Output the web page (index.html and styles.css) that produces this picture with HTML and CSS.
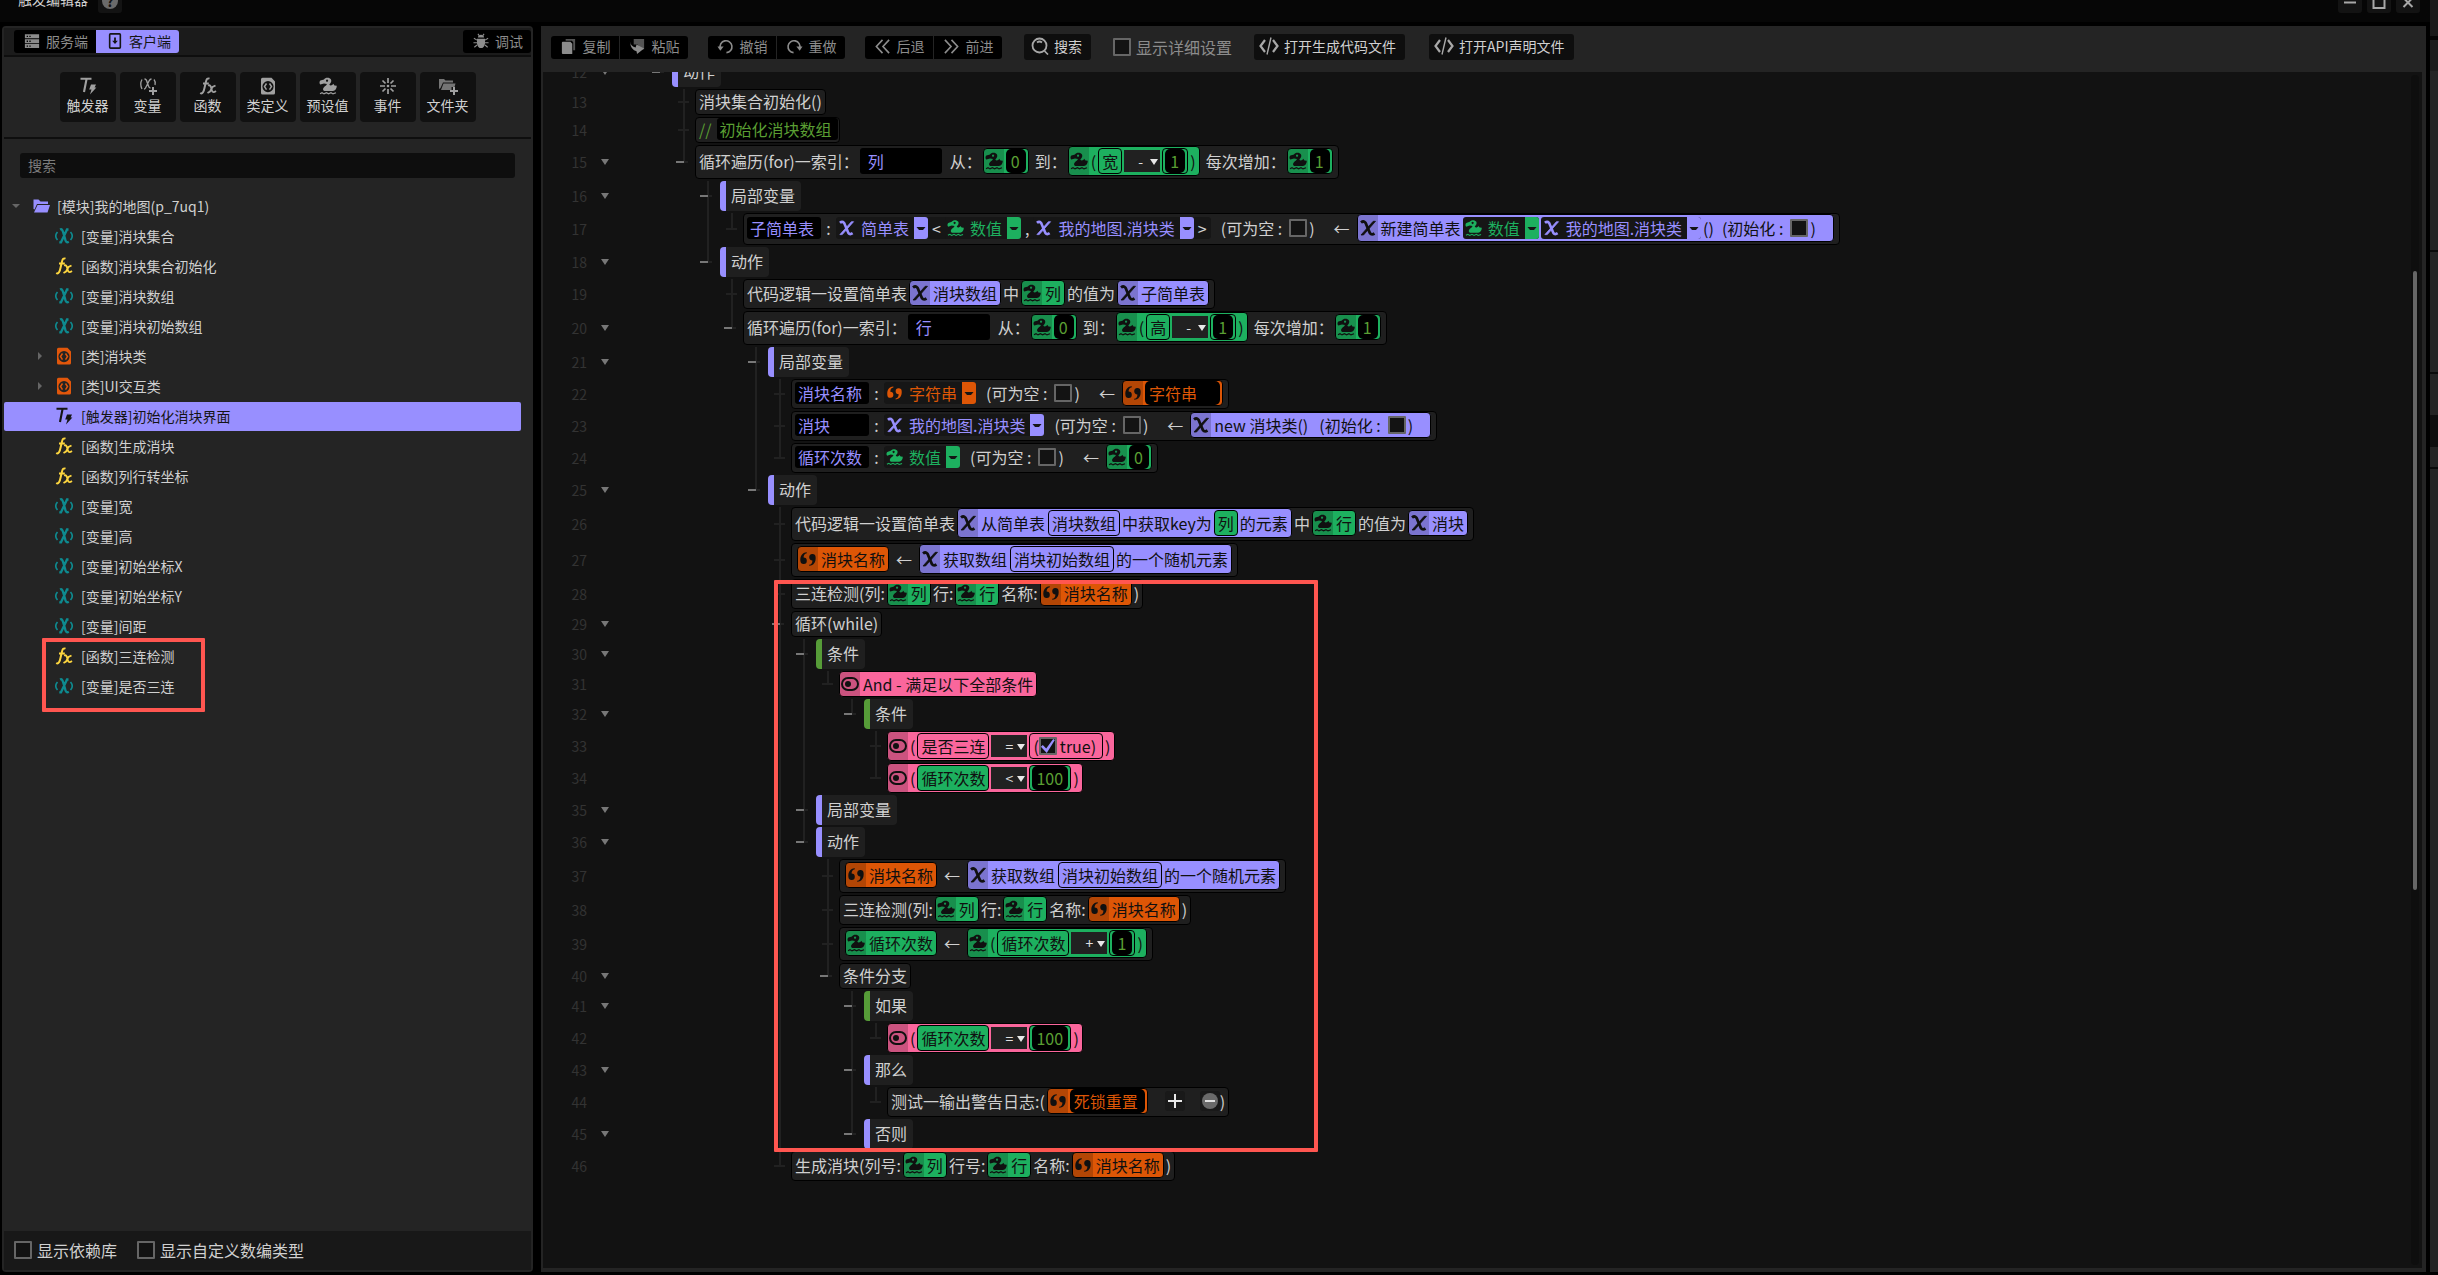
FILE: index.html
```html
<!DOCTYPE html>
<html lang="zh-CN">
<head>
<meta charset="utf-8">
<title>触发编辑器</title>
<link rel="stylesheet" href="styles.css">
</head>
<body>

<svg class="sprite" aria-hidden="true">
    <symbol id="duck" viewBox="0 0 18 18"><path d="M5 2.500C6 .5 10.500 0 12 2.500C13 4.500 11.500 6.300 10.300 7.400C11 9 13.300 8.600 14.200 6.800L15.500 8.600L17.800 8.800C17.800 12 16 13.600 14 14H5.500C3.200 13 3.600 10.600 7 8.400L8 7L5 6.400L1.200 7.600C.2 6.500.3 4.500 1.400 3.600ZM8 2.500A1.100 1.100 0 1 0 8.100 2.500Z" fill="currentColor" fill-rule="evenodd"/><path d="M1 16.700L3 15.700L5 16.900L7.400 15.700L9.600 16.900L12 15.700L14 16.900L17 15.800" fill="none" stroke="currentColor" stroke-width="1.200"/></symbol>
    <symbol id="chi" viewBox="0 0 18 18"><path d="M2 3.500C4.500 1.500 6.500 2.500 7.500 6L10 12C11 15 12.500 16.500 15.500 14.500" fill="none" stroke="currentColor" stroke-width="2.800"/><path d="M16.500 2.300H14.200L2 16H4.500Z" fill="currentColor" stroke="currentColor" stroke-width=".8"/></symbol>
    <symbol id="quote" viewBox="0 0 18 18"><path d="M7.800 3.200C5.500 3.500 4.600 5.200 4.600 7.600A3.200 3.200 0 1 1 1.400 11C1 6 3 2.600 7.800 2.200Z" fill="currentColor"/><path d="M10.200 14.800C12.500 14.500 13.400 12.800 13.400 10.400A3.200 3.200 0 1 1 16.600 7C17 12 15 15.400 10.200 15.800Z" fill="currentColor"/></symbol>
    <symbol id="bool" viewBox="0 0 18 18"><rect x="1" y="3" width="16" height="12" rx="6" fill="none" stroke="currentColor" stroke-width="2"/><circle cx="7" cy="9" r="3" fill="currentColor"/></symbol>
    <symbol id="var" viewBox="0 0 18 18"><path d="M5 2.500C7.200 1.500 7.800 4 8.500 6.500L10 11.500C10.500 14.500 11.500 16 13.800 14.800M13.500 2.500H12L6 15.300H4.300" fill="none" stroke="currentColor" stroke-width="2.300"/><path d="M2.500 5C.3 7.500.3 10.500 2.500 13M15.500 5C17.700 7.500 17.700 10.500 15.500 13" fill="none" stroke="currentColor" stroke-width="1.600"/></symbol>
    <symbol id="fx" viewBox="0 0 18 18"><path d="M1.200 16C3.600 17.500 4.800 14.500 5.600 10.500L7 4.500C7.600 2 8.600.8 10.500 1.700M4 6.500H9.800" fill="none" stroke="currentColor" stroke-width="2"/><path d="M9 8.500C11.500 7.500 12 10 12.500 12C13.200 15.500 14.500 15.800 17 14M16.500 8.500L13.500 10L11 14.500L8.500 16" fill="none" stroke="currentColor" stroke-width="1.800"/></symbol>
    <symbol id="class" viewBox="0 0 18 18"><path fill-rule="evenodd" fill="currentColor" d="M3.500.8H12.500L16 4.500V16Q16 17.500 14.500 17.500H3.500Q2 17.500 2 16V2.300Q2 .8 3.500.8ZM9 4A5.600 5.600 0 1 0 9 15.200A5.600 5.600 0 1 0 9 4Z"/><path d="M7.500 6.500L5.500 9.600L7.500 12.700M10.500 6.500L12.500 9.600L10.500 12.700" fill="none" stroke="currentColor" stroke-width="1.500"/></symbol>
    <symbol id="trig" viewBox="0 0 18 18"><path d="M1.500 1.800H12.500M7.600 1.800L5 15" fill="none" stroke="currentColor" stroke-width="2.100"/><path d="M12 7.500H17L15.600 10.600H17.400L11 17.600L12.500 12.600H10.200Z" fill="currentColor"/></symbol>
    <symbol id="folder" viewBox="0 0 18 18"><path d="M1.500 2.500H6.500L8.500 4.500H16V7H5L2.500 12.500L1.500 12Z" fill="currentColor"/><path d="M5.500 8H18L15.500 15.500H2Z" fill="currentColor"/></symbol>
    <symbol id="plus" viewBox="0 0 18 18"><path d="M9 2V16M2 9H16" fill="none" stroke="currentColor" stroke-width="2"/></symbol>
    <symbol id="caret" viewBox="0 0 14 22"><path d="M2.500 10H11.500L9 13H5Z" fill="#151515"/></symbol>
    <symbol id="server" viewBox="0 0 18 18"><path fill-rule="evenodd" fill="currentColor" d="M1 1.500H17V6H1ZM1 7H17V11.500H1ZM1 12.500H17V17H1ZM3 3V4.500H4.500V3ZM6 3V4.500H7.500V3ZM3 8.500V10H4.500V8.500ZM6 8.500V10H7.500V8.500ZM3 14V15.500H4.500V14ZM6 14V15.500H7.500V14Z"/></symbol>
    <symbol id="client" viewBox="0 0 18 18"><rect x="3" y="1" width="12" height="16" rx="1" fill="none" stroke="currentColor" stroke-width="1.800"/><path d="M9 5V11" stroke="currentColor" stroke-width="2"/><path d="M5.800 8.600H12.200L9 12.400Z" fill="currentColor"/></symbol>
    <symbol id="bug" viewBox="0 0 18 18"><path d="M5.500 5Q6 2 9 2T12.500 5ZM4.500 6.500H13.500V12Q12.500 17 9 17T4.500 12Z" fill="currentColor"/><path d="M5.500 1L7 3M12.500 1L11 3M4.500 8L1 6M4.500 11H.5M4.500 13.500L1.500 16M13.500 8L17 6M13.500 11H17.500M13.500 13.500L16.500 16" stroke="currentColor" stroke-width="1.200"/></symbol>
    <symbol id="event" viewBox="0 0 18 18"><path d="M9 1V6M9 12V17M1 9H6M12 9H17M3.500 3.500L6.500 6.500M11.500 11.500L14.500 14.500M3.500 14.500L6.500 11.500M11.500 6.500L14.500 3.500" stroke="currentColor" stroke-width="1.700"/><circle cx="9" cy="9" r="1.300" fill="currentColor"/></symbol>
    <symbol id="copy" viewBox="0 0 18 18"><path d="M6 1H16V13H14V4.500L12.500 3H6Z" fill="currentColor" opacity=".6"/><path d="M3 4H11L13 6V17H3Q2 17 2 16V5Q2 4 3 4Z" fill="currentColor"/></symbol>
    <symbol id="paste" viewBox="0 0 18 18"><path d="M5 1H16V12H13L9 7H5Z" fill="currentColor" opacity=".6"/><path d="M1 4Q2 9 7 10L8 7L16 11L8.500 17L8 14Q2 13 1 4Z" fill="currentColor"/></symbol>
    <symbol id="undo" viewBox="0 0 18 18"><path d="M3.500 11A6.300 6.300 0 1 1 10 15.500" fill="none" stroke="currentColor" stroke-width="1.700"/><path d="M.5 9H7L3.500 13.500Z" fill="currentColor"/></symbol>
    <symbol id="redo" viewBox="0 0 18 18"><path d="M14.500 11A6.300 6.300 0 1 0 8 15.500" fill="none" stroke="currentColor" stroke-width="1.700"/><path d="M17.500 9H11L14.500 13.500Z" fill="currentColor"/></symbol>
    <symbol id="back" viewBox="0 0 18 18"><path d="M9 2L2.500 9L9 16M16 2L9.500 9L16 16" fill="none" stroke="currentColor" stroke-width="1.700"/></symbol>
    <symbol id="fwd" viewBox="0 0 18 18"><path d="M2 2L8.500 9L2 16M9 2L15.500 9L9 16" fill="none" stroke="currentColor" stroke-width="1.700"/></symbol>
    <symbol id="find" viewBox="0 0 18 18"><circle cx="8.500" cy="8.500" r="7" fill="none" stroke="currentColor" stroke-width="1.800"/><path d="M13.500 14L17 17.500M6 5.500Q8.500 3.500 11 5.500" fill="none" stroke="currentColor" stroke-width="1.700"/></symbol>
    <symbol id="code" viewBox="0 0 20 18"><path d="M6 3L1.500 9L6 15M14 3L18.500 9L14 15" fill="none" stroke="currentColor" stroke-width="2.200"/><path d="M12 .5L8 17.500" stroke="currentColor" stroke-width="1.400"/></symbol>
</svg>

<header class="titlebar">
    <span class="title">触发编辑器</span>
    <button class="win help" aria-label="帮助"><b>?</b></button>
    <span class="grow"></span>
    <button class="win" aria-label="最小化"><svg class="ic" viewBox="0 0 18 18"><path d="M3 10.500H15" stroke="currentColor" stroke-width="2"/></svg></button>
    <button class="win" aria-label="最大化"><svg class="ic" viewBox="0 0 18 18"><rect x="3.500" y="4" width="11" height="12" fill="none" stroke="currentColor" stroke-width="2"/></svg></button>
    <button class="win" aria-label="关闭"><svg class="ic" viewBox="0 0 18 18"><path d="M4.500 6L13.500 15M13.500 6L4.500 15" stroke="currentColor" stroke-width="2"/></svg></button>
</header>

<main class="layout">

<aside class="sidebar">
    <nav class="tabs">
        <button class="tab"><svg class="ic"><use href="#server"/></svg>服务端</button>
        <button class="tab on"><svg class="ic"><use href="#client"/></svg>客户端</button>
        <span class="grow"></span>
        <button class="tab debug"><svg class="ic"><use href="#bug"/></svg>调试</button>
    </nav>
    <div class="create">
        <button><svg class="ic"><use href="#trig"/></svg>触发器</button>
        <button><svg class="ic" viewBox="0 0 18 18"><path d="M5.500 2Q7.500 2 8 5L9.500 9Q10 11 11.500 11M12.500 2Q11 2 10 4L6.500 11Q6 12 5 12M3 2.500Q.5 7 3 12M15 2.500Q17 5 16 8" fill="none" stroke="currentColor" stroke-width="1.300"/><path d="M14 10V18M10 14H18" stroke="currentColor" stroke-width="2"/></svg>变量</button>
        <button><svg class="ic"><use href="#fx"/></svg>函数</button>
        <button><svg class="ic"><use href="#class"/></svg>类定义</button>
        <button><svg class="ic"><use href="#duck"/></svg>预设值</button>
        <button><svg class="ic"><use href="#event"/></svg>事件</button>
        <button><svg class="ic" viewBox="0 0 18 18"><path d="M0 2H5L6.500 3.500H14V5.500H4L1.500 11L0 12ZM4.500 6.500H16.500L15.500 10H12.500V13H2Z" fill="currentColor" opacity=".7"/><path d="M15 10V18M11 14H19" stroke="currentColor" stroke-width="2"/></svg>文件夹</button>
    </div>
    <input class="search" type="text" placeholder="搜索" aria-label="搜索">
    <ul class="tree">
        <li class="root"><span class="arrow open"></span><svg class="ic mod"><use href="#folder"/></svg>[模块]我的地图(p_7uq1)</li>
        <li><svg class="ic var"><use href="#var"/></svg>[变量]消块集合</li>
        <li><svg class="ic fx"><use href="#fx"/></svg>[函数]消块集合初始化</li>
        <li><svg class="ic var"><use href="#var"/></svg>[变量]消块数组</li>
        <li><svg class="ic var"><use href="#var"/></svg>[变量]消块初始数组</li>
        <li><span class="arrow"></span><svg class="ic cls"><use href="#class"/></svg>[类]消块类</li>
        <li><span class="arrow"></span><svg class="ic cls"><use href="#class"/></svg>[类]UI交互类</li>
        <li class="sel"><svg class="ic"><use href="#trig"/></svg>[触发器]初始化消块界面</li>
        <li><svg class="ic fx"><use href="#fx"/></svg>[函数]生成消块</li>
        <li><svg class="ic fx"><use href="#fx"/></svg>[函数]列行转坐标</li>
        <li><svg class="ic var"><use href="#var"/></svg>[变量]宽</li>
        <li><svg class="ic var"><use href="#var"/></svg>[变量]高</li>
        <li><svg class="ic var"><use href="#var"/></svg>[变量]初始坐标X</li>
        <li><svg class="ic var"><use href="#var"/></svg>[变量]初始坐标Y</li>
        <li><svg class="ic var"><use href="#var"/></svg>[变量]间距</li>
        <li><svg class="ic fx"><use href="#fx"/></svg>[函数]三连检测</li>
        <li><svg class="ic var"><use href="#var"/></svg>[变量]是否三连</li>
        <li class="mark mark-tree" aria-hidden="true"></li>
    </ul>
    <footer class="options">
        <label><input type="checkbox">显示依赖库</label>
        <label><input type="checkbox">显示自定义数编类型</label>
    </footer>
</aside>

<section class="editor">
    <div class="toolbar">
        <div class="group">
            <button><svg class="ic"><use href="#copy"/></svg>复制</button>
            <button><svg class="ic"><use href="#paste"/></svg>粘贴</button>
        </div>
        <div class="group">
            <button><svg class="ic"><use href="#undo"/></svg>撤销</button>
            <button><svg class="ic"><use href="#redo"/></svg>重做</button>
        </div>
        <div class="group">
            <button><svg class="ic"><use href="#back"/></svg>后退</button>
            <button><svg class="ic"><use href="#fwd"/></svg>前进</button>
        </div>
        <button class="btn"><svg class="ic"><use href="#find"/></svg>搜索</button>
        <label><input type="checkbox">显示详细设置</label>
        <button class="btn wide"><svg class="ic"><use href="#code"/></svg>打开生成代码文件</button>
        <button class="btn wide"><svg class="ic"><use href="#code"/></svg>打开API声明文件</button>
    </div>

    <div class="canvas">
    <ol class="lines">
        <li class="line"><span class="num">12</span><button class="fold" aria-label="折叠"></button><i class="m end"></i>
            <div class="block">动作</div></li>

        <li class="line"><span class="num">13</span><span class="fold"></span><i></i><i class="t"></i>
            <div class="stmt">消块集合初始化()</div></li>

        <li class="line"><span class="num">14</span><span class="fold"></span><i></i><i class="t"></i>
            <div class="stmt comment">//<input class="field note" value="初始化消块数组" aria-label="注释"></div></li>

        <li class="line"><span class="num">15</span><button class="fold" aria-label="折叠"></button><i></i><i class="m end"></i>
            <div class="stmt loop">循环遍历(for)一索引：<input class="field idx" value="列" aria-label="索引">从：<span class="chip num-c"><svg class="ic"><use href="#duck"/></svg><input class="lit" value="0" aria-label="从"></span>到：<span class="chip num-c"><svg class="ic"><use href="#duck"/></svg>(<span class="chip num-c">宽</span><span class="op"><select aria-label="运算符"><option>-</option></select></span><span class="chip num-c"><input class="lit" value="1" aria-label="数值"></span>)</span>每次增加：<span class="chip num-c"><svg class="ic"><use href="#duck"/></svg><input class="lit" value="1" aria-label="每次增加"></span></div></li>

        <li class="line"><span class="num">16</span><button class="fold" aria-label="折叠"></button><i></i><i></i><i class="m"></i>
            <div class="block">局部变量</div></li>

        <li class="line"><span class="num">17</span><span class="fold"></span><i></i><i></i><i class="v"></i><i class="t end"></i>
            <div class="stmt"><input class="field" value="子简单表" aria-label="变量名"><span class="sep">:</span><span class="type obj-t"><svg class="ic"><use href="#chi"/></svg>简单表<button class="caret" aria-label="选择类型"><svg><use href="#caret"/></svg></button><span class="gen">&lt;</span><span class="type num-t"><svg class="ic"><use href="#duck"/></svg>数值<button class="caret" aria-label="选择类型"><svg><use href="#caret"/></svg></button></span><span class="gen">,</span><span class="type obj-t"><svg class="ic"><use href="#chi"/></svg>我的地图.消块类<button class="caret" aria-label="选择类型"><svg><use href="#caret"/></svg></button></span><span class="gen">&gt;</span></span><label class="opt">(可为空 :<input type="checkbox">)</label><span class="arr">←</span><span class="chip obj-c"><svg class="ic"><use href="#chi"/></svg><span class="cap">新建简单表</span><span class="type num-t"><svg class="ic"><use href="#duck"/></svg>数值<button class="caret" aria-label="选择类型"><svg><use href="#caret"/></svg></button></span><span class="type obj-t"><svg class="ic"><use href="#chi"/></svg>我的地图.消块类<button class="caret" aria-label="选择类型"><svg><use href="#caret"/></svg></button></span>()<label class="opt init">(初始化 :<input type="checkbox">)</label></span></div></li>

        <li class="line"><span class="num">18</span><button class="fold" aria-label="折叠"></button><i></i><i></i><i class="m end"></i>
            <div class="block">动作</div></li>

        <li class="line"><span class="num">19</span><span class="fold"></span><i></i><i></i><i></i><i class="t"></i>
            <div class="stmt">代码逻辑一设置简单表<span class="chip obj-c"><svg class="ic"><use href="#chi"/></svg><span class="cap">消块数组</span></span>中<span class="chip num-c"><svg class="ic"><use href="#duck"/></svg><span class="cap">列</span></span>的值为<span class="chip obj-c"><svg class="ic"><use href="#chi"/></svg><span class="cap">子简单表</span></span></div></li>

        <li class="line"><span class="num">20</span><button class="fold" aria-label="折叠"></button><i></i><i></i><i></i><i class="m end"></i>
            <div class="stmt loop">循环遍历(for)一索引：<input class="field idx" value="行" aria-label="索引">从：<span class="chip num-c"><svg class="ic"><use href="#duck"/></svg><input class="lit" value="0" aria-label="从"></span>到：<span class="chip num-c"><svg class="ic"><use href="#duck"/></svg>(<span class="chip num-c">高</span><span class="op"><select aria-label="运算符"><option>-</option></select></span><span class="chip num-c"><input class="lit" value="1" aria-label="数值"></span>)</span>每次增加：<span class="chip num-c"><svg class="ic"><use href="#duck"/></svg><input class="lit" value="1" aria-label="每次增加"></span></div></li>

        <li class="line"><span class="num">21</span><button class="fold" aria-label="折叠"></button><i></i><i></i><i></i><i></i><i class="m"></i>
            <div class="block">局部变量</div></li>

        <li class="line"><span class="num">22</span><span class="fold"></span><i></i><i></i><i></i><i></i><i class="v"></i><i class="t"></i>
            <div class="stmt"><input class="field" value="消块名称" aria-label="变量名"><span class="sep">:</span><span class="type str-t"><svg class="ic"><use href="#quote"/></svg>字符串<button class="caret" aria-label="选择类型"><svg><use href="#caret"/></svg></button></span><label class="opt">(可为空 :<input type="checkbox">)</label><span class="arr">←</span><span class="chip str-c"><svg class="ic"><use href="#quote"/></svg><input class="lit str" value="字符串" aria-label="初始值"></span></div></li>

        <li class="line"><span class="num">23</span><span class="fold"></span><i></i><i></i><i></i><i></i><i class="v"></i><i class="t"></i>
            <div class="stmt"><input class="field" value="消块" aria-label="变量名"><span class="sep">:</span><span class="type obj-t"><svg class="ic"><use href="#chi"/></svg>我的地图.消块类<button class="caret" aria-label="选择类型"><svg><use href="#caret"/></svg></button></span><label class="opt">(可为空 :<input type="checkbox">)</label><span class="arr">←</span><span class="chip obj-c"><svg class="ic"><use href="#chi"/></svg><span class="cap">new 消块类()</span><label class="opt init">(初始化 :<input type="checkbox">)</label></span></div></li>

        <li class="line"><span class="num">24</span><span class="fold"></span><i></i><i></i><i></i><i></i><i class="v"></i><i class="t end"></i>
            <div class="stmt"><input class="field" value="循环次数" aria-label="变量名"><span class="sep">:</span><span class="type num-t"><svg class="ic"><use href="#duck"/></svg>数值<button class="caret" aria-label="选择类型"><svg><use href="#caret"/></svg></button></span><label class="opt">(可为空 :<input type="checkbox">)</label><span class="arr">←</span><span class="chip num-c"><svg class="ic"><use href="#duck"/></svg><input class="lit" value="0" aria-label="初始值"></span></div></li>

        <li class="line"><span class="num">25</span><button class="fold" aria-label="折叠"></button><i></i><i></i><i></i><i></i><i class="m end"></i>
            <div class="block">动作</div></li>

        <li class="line"><span class="num">26</span><span class="fold"></span><i></i><i></i><i></i><i></i><i></i><i class="t"></i>
            <div class="stmt">代码逻辑一设置简单表<span class="chip obj-c"><svg class="ic"><use href="#chi"/></svg><span class="cap">从简单表</span><span class="chip obj-c">消块数组</span>中获取key为<span class="chip num-c">列</span><span class="tail">的元素</span></span>中<span class="chip num-c"><svg class="ic"><use href="#duck"/></svg><span class="cap">行</span></span>的值为<span class="chip obj-c"><svg class="ic"><use href="#chi"/></svg><span class="cap">消块</span></span></div></li>

        <li class="line"><span class="num">27</span><span class="fold"></span><i></i><i></i><i></i><i></i><i></i><i class="t"></i>
            <div class="stmt"><span class="chip str-c"><svg class="ic"><use href="#quote"/></svg><span class="cap">消块名称</span></span><span class="arr">←</span><span class="chip obj-c"><svg class="ic"><use href="#chi"/></svg><span class="cap">获取数组</span><span class="chip obj-c">消块初始数组</span><span class="tail">的一个随机元素</span></span></div></li>

        <li class="line"><span class="num">28</span><span class="fold"></span><i></i><i></i><i></i><i></i><i></i><i class="t"></i>
            <div class="stmt">三连检测(列:<span class="chip num-c"><svg class="ic"><use href="#duck"/></svg><span class="cap">列</span></span>行:<span class="chip num-c"><svg class="ic"><use href="#duck"/></svg><span class="cap">行</span></span>名称:<span class="chip str-c"><svg class="ic"><use href="#quote"/></svg><span class="cap">消块名称</span></span>)</div></li>

        <li class="line"><span class="num">29</span><button class="fold" aria-label="折叠"></button><i></i><i></i><i></i><i></i><i></i><i class="m"></i>
            <div class="stmt">循环(while)</div></li>

        <li class="line"><span class="num">30</span><button class="fold" aria-label="折叠"></button><i></i><i></i><i></i><i></i><i></i><i class="v"></i><i class="m"></i>
            <div class="block cond">条件</div></li>

        <li class="line"><span class="num">31</span><span class="fold"></span><i></i><i></i><i></i><i></i><i></i><i class="v"></i><i class="v"></i><i class="t end"></i>
            <span class="chip bool-c"><svg class="ic"><use href="#bool"/></svg><span class="cap">And - 满足以下全部条件</span></span></li>

        <li class="line"><span class="num">32</span><button class="fold" aria-label="折叠"></button><i></i><i></i><i></i><i></i><i></i><i class="v"></i><i class="v"></i><i></i><i class="m end"></i>
            <div class="block cond">条件</div></li>

        <li class="line"><span class="num">33</span><span class="fold"></span><i></i><i></i><i></i><i></i><i></i><i class="v"></i><i class="v"></i><i></i><i></i><i class="t"></i>
            <span class="chip bool-c"><svg class="ic"><use href="#bool"/></svg>(<span class="chip bool-c">是否三连</span><span class="op"><select aria-label="运算符"><option>=</option></select></span><label class="chip bool-c">(<input type="checkbox" checked><span class="cap">true)</span></label>)</span></li>

        <li class="line"><span class="num">34</span><span class="fold"></span><i></i><i></i><i></i><i></i><i></i><i class="v"></i><i class="v"></i><i></i><i></i><i class="t end"></i>
            <span class="chip bool-c"><svg class="ic"><use href="#bool"/></svg>(<span class="chip num-c">循环次数</span><span class="op"><select aria-label="运算符"><option>&lt;</option></select></span><span class="chip num-c"><input class="lit big" value="100" aria-label="数值"></span>)</span></li>

        <li class="line"><span class="num">35</span><button class="fold" aria-label="折叠"></button><i></i><i></i><i></i><i></i><i></i><i class="v"></i><i class="m"></i>
            <div class="block">局部变量</div></li>

        <li class="line"><span class="num">36</span><button class="fold" aria-label="折叠"></button><i></i><i></i><i></i><i></i><i></i><i class="v"></i><i class="m end"></i>
            <div class="block">动作</div></li>

        <li class="line"><span class="num">37</span><span class="fold"></span><i></i><i></i><i></i><i></i><i></i><i class="v"></i><i></i><i class="t"></i>
            <div class="stmt"><span class="chip str-c"><svg class="ic"><use href="#quote"/></svg><span class="cap">消块名称</span></span><span class="arr">←</span><span class="chip obj-c"><svg class="ic"><use href="#chi"/></svg><span class="cap">获取数组</span><span class="chip obj-c">消块初始数组</span><span class="tail">的一个随机元素</span></span></div></li>

        <li class="line"><span class="num">38</span><span class="fold"></span><i></i><i></i><i></i><i></i><i></i><i class="v"></i><i></i><i class="t"></i>
            <div class="stmt">三连检测(列:<span class="chip num-c"><svg class="ic"><use href="#duck"/></svg><span class="cap">列</span></span>行:<span class="chip num-c"><svg class="ic"><use href="#duck"/></svg><span class="cap">行</span></span>名称:<span class="chip str-c"><svg class="ic"><use href="#quote"/></svg><span class="cap">消块名称</span></span>)</div></li>

        <li class="line"><span class="num">39</span><span class="fold"></span><i></i><i></i><i></i><i></i><i></i><i class="v"></i><i></i><i class="t"></i>
            <div class="stmt"><span class="chip num-c"><svg class="ic"><use href="#duck"/></svg><span class="cap">循环次数</span></span><span class="arr">←</span><span class="chip num-c"><svg class="ic"><use href="#duck"/></svg>(<span class="chip num-c">循环次数</span><span class="op"><select aria-label="运算符"><option>+</option></select></span><span class="chip num-c"><input class="lit" value="1" aria-label="数值"></span>)</span></div></li>

        <li class="line"><span class="num">40</span><button class="fold" aria-label="折叠"></button><i></i><i></i><i></i><i></i><i></i><i class="v"></i><i></i><i class="m end"></i>
            <div class="stmt">条件分支</div></li>

        <li class="line"><span class="num">41</span><button class="fold" aria-label="折叠"></button><i></i><i></i><i></i><i></i><i></i><i class="v"></i><i></i><i></i><i class="m"></i>
            <div class="block cond">如果</div></li>

        <li class="line"><span class="num">42</span><span class="fold"></span><i></i><i></i><i></i><i></i><i></i><i class="v"></i><i></i><i></i><i class="v"></i><i class="t end"></i>
            <span class="chip bool-c"><svg class="ic"><use href="#bool"/></svg>(<span class="chip num-c">循环次数</span><span class="op"><select aria-label="运算符"><option>=</option></select></span><span class="chip num-c"><input class="lit big" value="100" aria-label="数值"></span>)</span></li>

        <li class="line"><span class="num">43</span><button class="fold" aria-label="折叠"></button><i></i><i></i><i></i><i></i><i></i><i class="v"></i><i></i><i></i><i class="m"></i>
            <div class="block">那么</div></li>

        <li class="line"><span class="num">44</span><span class="fold"></span><i></i><i></i><i></i><i></i><i></i><i class="v"></i><i></i><i></i><i class="v"></i><i class="t end"></i>
            <div class="stmt">测试一输出警告日志:(<span class="chip str-c"><svg class="ic"><use href="#quote"/></svg><input class="lit str" value="死锁重置" aria-label="日志"></span><button class="args" aria-label="添加参数"><svg class="ic"><use href="#plus"/></svg></button><button class="args" aria-label="移除参数"><svg class="ic" viewBox="0 0 18 18"><circle cx="9" cy="9" r="8" fill="#6a6a6a"/><path d="M4 9H14" stroke="#e0e0e0" stroke-width="2"/></svg></button>)</div></li>

        <li class="line"><span class="num">45</span><button class="fold" aria-label="折叠"></button><i></i><i></i><i></i><i></i><i></i><i class="v"></i><i></i><i></i><i class="m end"></i>
            <div class="block">否则</div></li>

        <li class="line"><span class="num">46</span><span class="fold"></span><i></i><i></i><i></i><i></i><i></i><i class="t end"></i>
            <div class="stmt">生成消块(列号:<span class="chip num-c"><svg class="ic"><use href="#duck"/></svg><span class="cap">列</span></span>行号:<span class="chip num-c"><svg class="ic"><use href="#duck"/></svg><span class="cap">行</span></span>名称:<span class="chip str-c"><svg class="ic"><use href="#quote"/></svg><span class="cap">消块名称</span></span>)</div></li>

        <li class="mark mark-code" aria-hidden="true"></li>
    </ol>
    <div class="scroll"><div class="thumb"></div></div>
    </div>
</section>

<!-- edge of the neighbouring dock panel -->
<aside class="dock">
    <div class="d-head"></div>
    <div class="d-body">
        <div class="d-pad"></div>
        <div class="d-tools"></div>
        <div class="d-find"></div>
    </div>
</aside>

</main>
</body>
</html>
```
FILE: styles.css
```css
* {
    box-sizing: border-box;
}

body {
    margin: 0;
    height: 100vh;
    display: flex;
    flex-direction: column;
    overflow: hidden;
    background: #000;
    color: #d0d0d0;
    font-family: "Noto Sans CJK SC", "Noto Sans", sans-serif;
    font-size: 14px;
    line-height: 20px;
}

button, input, select {
    font: inherit;
    color: inherit;
    margin: 0;
    padding: 0;
    border: 0;
    background: none;
}

ul, ol {
    list-style: none;
    margin: 0;
    padding: 0;
}

.sprite {
    position: absolute;
    width: 0;
    height: 0;
}

.ic {
    flex: none;
    width: 18px;
    height: 18px;
    overflow: visible;
}

.grow {
    flex: 1;
}

input[type=checkbox] {
    appearance: none;
    flex: none;
    width: 18px;
    height: 18px;
    border: 2px solid #666;
    border-radius: 1px;
    background: #131313;
}

input[type=checkbox]:checked::before {
    content: "";
    display: block;
    height: 14px;
    background: #988fff;
    clip-path: polygon(0 55%, 14% 42%, 38% 68%, 88% 0, 100% 8%, 42% 100%);
}

/* title bar */

.titlebar {
    flex: none;
    height: 22px;
    margin-bottom: 4px;
    padding: 0 18px;
    background: #060606;
    display: flex;
    align-items: flex-start;
    gap: 5px;
}

.title {
    margin: -11px 5px 0 0;
}

.win {
    width: 24px;
    height: 24px;
    margin-top: -11px;
    border-radius: 3px;
    background: #131313;
    color: #a8a8a8;
    display: flex;
    align-items: center;
    justify-content: center;
}

.help b {
    width: 16px;
    height: 16px;
    border-radius: 50%;
    background: #6a6a6a;
    color: #131313;
    font-size: 14px;
    line-height: 16px;
}

.layout {
    flex: 1;
    min-height: 0;
    display: flex;
    padding: 0 0 3px 2px;
}

/* sidebar */

.sidebar {
    flex: 0 0 531px;
    margin-right: 8px;
    border: 2px solid #242424;
    border-radius: 4px;
    background: #242424;
    display: flex;
    flex-direction: column;
}

.tabs {
    flex: none;
    height: 29px;
    padding: 2px 0 2px 10px;
    border-bottom: 2px solid #0e0e0e;
    background: #1b1b1b;
    display: flex;
}

.tab {
    height: 23px;
    padding: 0 8px 2px 10px;
    border-radius: 3px 0 0 3px;
    background: #000;
    color: #8c8c8c;
    display: flex;
    align-items: center;
    gap: 6px;
}

.tab .ic {
    width: 16px;
    height: 16px;
}

.tab.on {
    padding-left: 11px;
    border-radius: 0 3px 3px 0;
    background: #988fff;
    color: #151515;
}

.tab.debug {
    border-radius: 3px;
}

.create {
    flex: none;
    height: 82px;
    padding-top: 15px;
    border-bottom: 2px solid #0e0e0e;
    display: flex;
    justify-content: center;
    gap: 4px;
}

.create button {
    width: 56px;
    height: 50px;
    padding-bottom: 2px;
    border-radius: 4px;
    background: #111;
    display: flex;
    flex-direction: column;
    align-items: center;
    justify-content: center;
}

.create .ic {
    color: #a0a0a0;
}

.search {
    flex: none;
    height: 25px;
    margin: 14px 16px;
    padding: 0 8px 2px;
    border-radius: 3px;
    background: #0e0e0e;
}

.search::placeholder {
    color: #7c7c7c;
}

.tree {
    flex: 1;
    position: relative;
}

.tree li {
    height: 29px;
    margin: 0 10px 1px 0;
    padding: 0 0 2px 51px;
    border-radius: 2px;
    display: flex;
    align-items: center;
    gap: 8px;
    position: relative;
}

.tree .root {
    padding-left: 28px;
    gap: 7px;
}

.tree .sel {
    background: #988fff;
    color: #151515;
}

.arrow {
    position: absolute;
    left: 34px;
    border: 4px solid transparent;
    border-left-color: #666;
    border-right: 0;
}

.arrow.open {
    left: 8px;
    border: 4px solid transparent;
    border-top-color: #666;
    border-bottom: 0;
}

.mod { color: #988fff; }
.var { color: #0e8a8f; }
.fx { color: #fcd53f; }
.cls { color: #e2570b; }

.options {
    flex: none;
    height: 39px;
    padding: 0 0 2px 10px;
    background: #181818;
    display: flex;
    align-items: center;
    gap: 20px;
    font-size: 16px;
}

.options label,
.toolbar label {
    display: flex;
    align-items: center;
    gap: 5px;
}

/* red frames */

.mark,
.tree .mark {
    position: absolute;
    margin: 0;
    padding: 0;
    border: 4px solid #ff5650;
    border-radius: 1px;
    pointer-events: none;
}

.tree .mark-tree {
    left: 38px;
    top: 446px;
    width: 163px;
    height: 74px;
}

.mark-code {
    left: 231px;
    top: 523px;
    width: 544px;
    height: 572px;
}

/* editor */

.editor {
    flex: 1;
    min-width: 0;
    border: solid #242424;
    border-width: 0 4px 4px 2px;
    background: #121212;
    display: flex;
    flex-direction: column;
}

.toolbar {
    flex: none;
    height: 46px;
    padding: 0 0 4px 8px;
    background: #242424;
    display: flex;
    align-items: center;
}

.group {
    margin-right: 20px;
    border-radius: 3px;
    background: #000;
    color: #8c8c8c;
    display: flex;
}

.group button {
    width: 68px;
    height: 23px;
    padding-bottom: 2px;
    display: flex;
    align-items: center;
    justify-content: center;
    gap: 6px;
}

.group button + button {
    width: 69px;
    border-left: 1px solid #242424;
}

.group .ic {
    width: 17px;
    height: 17px;
}

.btn {
    height: 26px;
    margin-left: 2px;
    padding: 0 9px 2px 7px;
    border-radius: 3px;
    background: #0e0e0e;
    display: flex;
    align-items: center;
    gap: 5px;
}

.btn .ic {
    color: #a8a8a8;
}

.btn + label {
    margin: 0 20px 0 22px;
    color: #8c8c8c;
    font-size: 16px;
}

.btn.wide {
    margin-right: 22px;
    padding: 0 9px 2px 5px;
}

.btn.wide .ic {
    width: 20px;
}

.canvas {
    flex: 1;
    min-height: 0;
    position: relative;
    overflow: hidden;
}

.lines {
    margin-top: -15px;
    position: relative;
    font-size: 16px;
    white-space: nowrap;
}

.line {
    margin-bottom: 2px;
    display: flex;
    align-items: center;
}

.line .num {
    width: 44px;
    color: #333;
    font-size: 14px;
    text-align: right;
}

.fold {
    width: 36px;
    margin-right: 24px;
    height: 20px;
    display: flex;
    align-items: center;
    justify-content: center;
}

button.fold::before {
    content: "";
    border: 4px solid transparent;
    border-top: 6px solid #777;
    border-bottom: 0;
}

/* indent guides, one column for each level */

.line > i {
    flex: none;
    width: 24px;
    align-self: stretch;
    position: relative;
}

.line > i.v::before,
.line > i.t::before,
.line > i.m::before {
    content: "";
    position: absolute;
    left: 12px;
    top: 0;
    bottom: -2px;
    width: 2px;
    background: #212121;
}

.line > i.end::before {
    bottom: 50%;
}

.line > i.t::after,
.line > i.m::after {
    content: "";
    position: absolute;
    left: 7px;
    top: 50%;
    width: 11px;
    height: 2px;
    margin-top: -1px;
    background: #212121;
}

.line > i.m::after {
    left: 5px;
    width: 12px;
    background: linear-gradient(90deg, #777 8px, #212121 8px);
}

/* blocks and statements */

.block {
    height: 30px;
    margin-left: 1px;
    padding: 0 6px 0 5px;
    border-left: 6px solid #988fff;
    border-radius: 4px;
    background: #1f1f1f;
    line-height: 28px;
}

.block.cond {
    border-left-color: #569c38;
}

.stmt {
    min-height: 26px;
    padding: 0 3px 2px;
    border: 1px solid #000;
    border-radius: 4px;
    background: #1f1f1f;
    display: flex;
    align-items: center;
}

.field {
    width: 74px;
    height: 22px;
    padding: 0 3px;
    border-radius: 3px;
    background: #000;
    color: #988fff;
}

.field.idx {
    width: 82px;
    height: 26px;
    margin: 0 8px 0 1px;
    padding: 0 8px;
}

.comment {
    padding-right: 1px;
    color: #5a9e33;
}

.field.note {
    width: 121px;
    margin-left: 5px;
    color: #5a9e33;
}

.sep {
    width: 15px;
    text-align: center;
}

.arr {
    margin: 0 5px;
}

.chip {
    flex: none;
    min-height: 26px;
    margin: 0 2px;
    border: 1px solid #000;
    border-radius: 4px;
    color: #101010;
    display: flex;
    align-items: center;
}

.line > .chip {
    margin-left: 0;
}

/* darker strip behind the leading icon */
.chip:has(> .ic) {
    background-image: linear-gradient(90deg, rgba(0, 0, 0, .19) 20px, transparent 20px);
}

.chip > .ic {
    margin: 0 1px;
}

.chip .cap {
    padding: 0 3px;
}

.chip .tail {
    padding-right: 3px;
}

.chip .chip {
    margin: 1px 2px;
    padding: 0 3px;
}

.chip .cap + .chip {
    margin-left: 0;
}

.num-c { background-color: #1db05f; }
.obj-c { background-color: #988fff; }
.str-c { background-color: #dd5606; }
.bool-c { background-color: #fa669c; }

/* expressions keep room beside their outer brackets */
.chip:has(> .op) {
    padding-right: 3px;
}

.chip:has(> .op) > .ic {
    margin-right: 3px;
}

.chip .chip:has(> .lit) {
    padding: 0;
}

.loop > .chip {
    margin: 0 6px 0 1px;
}

.loop > .chip:last-child {
    margin-right: 2px;
}

.lit {
    width: 20px;
    height: 24px;
    margin: 0 2px;
    padding: 0 5px;
    border-radius: 5px;
    background: #000;
    color: #5a9e33;
}

.lit.big {
    width: 36px;
    padding: 0 4px;
}

.lit.str {
    width: 75px;
    padding: 0 4px;
    color: #dd5606;
}

.op {
    width: 36px;
    height: 22px;
    background: #212121;
    color: #e0e0e0;
    position: relative;
}

.op select {
    appearance: none;
    width: 36px;
    height: 22px;
    padding-left: 14px;
    font-size: 14px;
    display: block;
}

.op::after {
    content: "";
    position: absolute;
    right: 2px;
    top: 9px;
    border: 4px solid transparent;
    border-top: 6px solid #e8e8e8;
    border-bottom: 0;
    pointer-events: none;
}

.type {
    height: 22px;
    padding-left: 2px;
    border-radius: 3px;
    background: #161616;
    display: flex;
    align-items: center;
}

.type > .ic {
    width: 17px;
    margin-right: 6px;
}

.chip > .type {
    margin: 2px 2px 2px 0;
}

.chip .cap + .type {
    margin-left: -1px;
}

.caret {
    width: 14px;
    height: 22px;
    margin-left: 5px;
    border-radius: 0 3px 3px 0;
}

.caret svg {
    display: block;
    width: 14px;
    height: 22px;
}

.num-t { color: #1db05f; }
.obj-t { color: #988fff; }
.str-t { color: #dd5606; }
.num-t > .caret { background: #1db05f; }
.obj-t > .caret { background: #988fff; }
.str-t > .caret { background: #dd5606; }

.gen {
    padding: 0 4px;
    color: #d0d0d0;
}

.opt {
    margin: 0 14px 0 10px;
    display: flex;
    align-items: center;
}

.opt input {
    margin: 0 2px 0 7px;
}

.opt.init {
    margin: 0 17px 0 8px;
}

.args {
    width: 20px;
    height: 20px;
    margin: 0 0 0 15px;
    border-radius: 3px;
    background: #191919;
    color: #e8e8e8;
    display: flex;
    align-items: center;
    justify-content: center;
}

/* scrollbar */

.scroll {
    position: absolute;
    top: 3px;
    right: 3px;
    bottom: 3px;
    width: 8px;
    border-radius: 4px;
    background: #0e0e0e;
}

.thumb {
    width: 4px;
    height: 52%;
    margin: 196px 2px 0;
    border-radius: 2px;
    background: #666;
}

/* neighbouring dock */

.dock {
    flex: 0 0 8px;
    margin: -26px 0 0 4px;
    display: flex;
    flex-direction: column;
}

.d-head {
    height: 40px;
    border-bottom: 4px solid #060606;
    background: #1a1a1a;
}

.d-body {
    flex: 1;
    border-top: 31px solid #1c1c1c;
    background: #242424;
}

.d-pad {
    height: 181px;
    border-bottom: 2px solid #0a0a0a;
}

.d-tools {
    height: 122px;
    border-bottom: 2px solid #0a0a0a;
}

.d-find {
    height: 93px;
    border: solid #242424;
    border-width: 41px 0 20px;
    background: #0e0e0e;
    box-shadow: 0 2px #0a0a0a;
}
```
